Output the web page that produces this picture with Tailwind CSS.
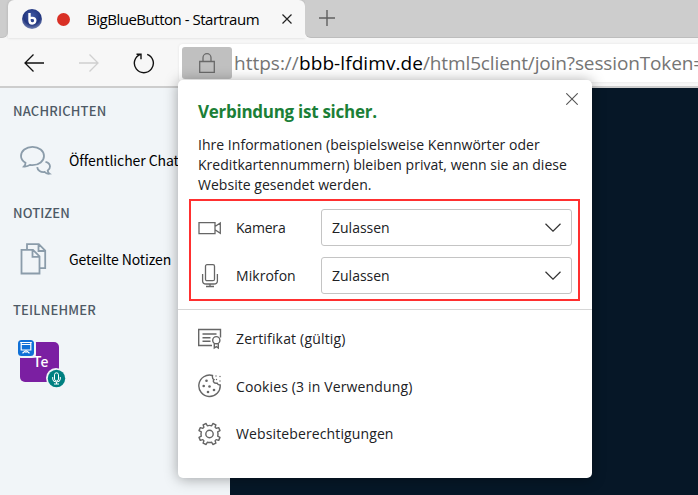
<!DOCTYPE html>
<html lang="de">
<head>
<meta charset="utf-8">
<title>BigBlueButton - Startraum</title>
<script src="https://cdn.jsdelivr.net/npm/@tailwindcss/browser@4"></script>
</head>
<body class="relative w-[698px] h-[495px] overflow-hidden bg-[#f7f7f7] font-['Open_Sans','Noto_Sans',sans-serif] text-[#202124] whitespace-nowrap flex flex-col">

<!-- Tab strip -->
<header class="h-[38px] shrink-0 flex bg-[#cdcdcd] border-b border-[#c2c2c2]">
  <div class="w-2 h-[38px] bg-[#f7f7f7]"><div class="h-full bg-[#cdcdcd] rounded-br-md border-b border-[#c2c2c2]"></div></div>
  <div class="w-[297px] h-[38px] bg-[#f7f7f7] rounded-t-md flex items-center pl-[14px] shadow-[0_0_3px_rgba(0,0,0,.15)]">
    <svg class="w-5 h-5 shrink-0" viewBox="0 0 20 20">
      <defs><radialGradient id="orb" cx=".5" cy=".35" r=".65"><stop offset="0" stop-color="#3f58a4"/><stop offset=".65" stop-color="#22367f"/><stop offset="1" stop-color="#7584b4"/></radialGradient></defs>
      <circle cx="10" cy="10" r="10" fill="url(#orb)"/>
      <path d="M7.500 4v7.500q0 3 2.800 3t3-3q0-2.600-3-2.600H8" fill="none" stroke="#fff" stroke-width="2.400"/>
    </svg>
    <div class="w-[13px] h-[13px] rounded-full bg-[#d93025] ml-[15px]"></div>
    <span class="text-[15px] leading-5 text-black ml-[17px] w-[173px] tracking-[-0.48px] -mt-px">BigBlueButton - Startraum</span>
    <svg class="w-[10px] h-[10px] ml-[22px]" viewBox="0 0 10 10"><path d="M.5.5l9 9m0-9l-9 9" stroke="#222" stroke-width="1.2"/></svg>
  </div>
  <div class="flex-1 h-[38px] bg-[#f7f7f7]">
    <div class="h-full bg-[#cdcdcd] rounded-bl-md border-b border-[#bdbdbd] pl-[14px] pt-[10px]">
      <svg class="w-4 h-4" viewBox="0 0 16 16"><path d="M8 0v16M0 8h16" stroke="#606060" stroke-width="1.400"/></svg>
    </div>
  </div>
</header>

<!-- Navigation and address bar -->
<nav class="h-[50px] shrink-0 border-b-2 border-[#cdcdcd] flex pt-[6px]">
  <div class="w-[179px] shrink-0 flex items-center pl-6 pb-[5px]">
    <svg class="w-5 h-[18px]" viewBox="0 0 20 18"><path d="M20 9H1M9.5.5L1 9l8.500 8.500" fill="none" stroke="#111" stroke-width="1.3"/></svg>
    <svg class="w-5 h-[18px] ml-[35px]" viewBox="0 0 20 18"><path d="M0 9h19M10.500.5L19 9l-8.500 8.500" fill="none" stroke="#d0d0d0" stroke-width="1.3"/></svg>
    <svg class="w-[22px] h-[22px] ml-[34px]" viewBox="0 0 22 22"><path d="M14.200 2.300A9.500 9.500 0 1 1 7.500 2.300M3.500 2.300h4.500v5" fill="none" stroke="#111" stroke-width="1.4"/></svg>
  </div>
  <div class="flex-1 min-w-0 overflow-hidden h-[38px] bg-white rounded-l flex pt-[3px] pl-[3px] shadow-[0_0_3px_rgba(0,0,0,.08)]">
    <div class="w-[50px] h-8 shrink-0 rounded-[3px] bg-[#c0c0c0] flex items-center justify-center">
      <svg class="w-4 h-5" viewBox="0 0 16 20"><path d="M.7 8.500h14.600v10.800H.7zM4 8.500V4.700a4 4 0 0 1 8 0v3.800" fill="none" stroke="#696969" stroke-width="1.3"/></svg>
    </div>
    <div class="ml-[2px] text-[19px] leading-8 text-[#757575] flex"><span class="w-[65px] shrink-0">https://</span><span class="w-[124px] shrink-0 text-black tracking-[0.08px]">bbb-lfdimv.de</span><span class="tracking-[-0.13px]">/html5client/join?sessionToken=</span></div>
  </div>
</nav>

<!-- Meeting page -->
<main class="flex-1 flex">
  <aside class="w-[230px] bg-[#f1f5f8] pl-[13px] font-['Noto_Sans_CJK_SC','Open_Sans',sans-serif] text-[14px] leading-5">
    <h2 class="mt-[13px] font-medium text-[#4e5a66] text-[13px] tracking-[0.18px]">NACHRICHTEN</h2>
    <div class="h-[82px] flex items-center pl-[7px] pb-[3px] text-black">
      <svg class="w-8 h-8" viewBox="0 0 32 32" fill="none" stroke="#8b9caa" stroke-width="1.800"><path d="M4 21.500Q5.500 20 5.500 17.700C2.500 16 1 13.500 1 11 1 6 6 1.800 12.500 1.800S24 6 24 11s-5 9.200-11.500 9.200q-1.500 0-2.500-.3Q7.500 21.800 4 21.500Z"/><path d="M25.500 16.800c2.800.7 4.500 2.600 4.500 4.800 0 2-1 3.200-2.300 4q.3 2.200 1.800 3.100-3 .5-4.800-1.700c-4 .5-7.200-1.500-7.500-4.800"/></svg>
      <span class="ml-[17px] -mt-px tracking-[-0.08px]">Öffentlicher Chat</span>
    </div>
    <h2 class="font-medium text-[#4e5a66] text-[13px] tracking-[0.1px]">NOTIZEN</h2>
    <div class="h-[77px] flex items-center pl-[7px] pb-[5px] text-black">
      <svg class="w-8 h-8" viewBox="0 0 32 32" fill="none" stroke="#8b9caa" stroke-width="1.800"><path d="M1.500 6.800h11.500l6.500 6.500v17.200h-18zM12.500 7v6.800h6.500M7 6.500V1.200h11.800l6.400 6.500v17.500h-5.500M18.500 1.500V8h6.500"/></svg>
      <span class="ml-[17px] tracking-[-0.13px]">Geteilte Notizen</span>
    </div>
    <h2 class="font-medium text-[#4e5a66] text-[13px] tracking-[0.18px]">TEILNEHMER</h2>
    <div class="relative mt-[22px] ml-[7px] w-[39px] h-10 rounded-[5px] bg-[#7b1fa2] text-white font-medium text-[14px] leading-[38px] pl-[13px]">Te
      <div class="absolute -left-[3px] -top-[3px] w-[19px] h-[19px] rounded bg-[#f1f5f8]"></div>
      <svg class="absolute -left-[2px] -top-[2px] w-4 h-4" viewBox="0 0 16 16"><rect width="16" height="16" rx="3.500" fill="#0f70d7"/><path d="M2.200 2.500h11.600M3.200 3v7h9.600V3M3.500 4.500h9M8 10v3M4.500 13.200l2.500-2M11.500 13.200l-2.500-2" fill="none" stroke="#fff" stroke-width="1.200"/></svg>
      <svg class="absolute left-[26px] top-[26px] w-5 h-5" viewBox="0 0 20 20"><circle cx="10" cy="10" r="10" fill="#f1f5f8"/><circle cx="10.500" cy="10.500" r="8.700" fill="#008081"/><rect x="8.500" y="4.800" width="4" height="8.200" rx="2" fill="none" stroke="#fff"/><path d="M6.700 9v2q0 3 3.800 3t3.800-3V9M10.500 14v2M8 16h5" fill="none" stroke="#fff"/></svg>
    </div>
  </aside>
  <div class="flex-1 bg-[#061727]"></div>
</main>

<!-- Site information popup -->
<section class="absolute left-[178px] top-[80px] w-[414px] h-[398px] bg-white rounded-[5px] shadow-[0_1px_14px_rgba(0,0,0,.35)] text-[14px]">
  <svg class="absolute left-[388px] top-[13px] w-3 h-3" viewBox="0 0 12 12"><path d="M.3.3l11.400 11.400m0-11.400L.3 11.700" stroke="#555" stroke-width="1.100"/></svg>
  <div class="pl-5 pt-5 h-[121px]">
    <h1 class="text-[17px] leading-6 font-bold text-[#1b7f37] tracking-[-0.27px]">Verbindung ist sicher.</h1>
    <p class="mt-[11px] leading-5 tracking-[0.03px]">Ihre Informationen (beispielsweise Kennwörter oder<br>Kreditkartennummern) bleiben privat, wenn sie an diese<br>Website gesendet werden.</p>
  </div>
  <div class="ml-[11px] -mt-[2px] w-[391px] h-[102px] border-2 border-[#ff3030] pl-[7px] pt-2 flex flex-col gap-[11px]">
    <div class="flex items-center h-[37px]">
      <svg class="w-6 h-6" viewBox="0 0 24 24" fill="none" stroke="#666" stroke-width="1.300"><path d="M1 6.600h16v11H1zM17 10.500l5.300-3.500v10.200L17 13.700"/></svg>
      <span class="ml-[14px] w-[85px] tracking-[-0.2px]">Kamera</span>
      <div class="w-[251px] h-[37px] border border-[#c4c4c4] rounded-[3px] flex items-center justify-between px-[10px]"><span>Zulassen</span><svg class="w-4 h-[9px]" viewBox="0 0 16 9"><path d="M.5.8L8 8.200 15.500.8" fill="none" stroke="#333" stroke-width="1.200"/></svg></div>
    </div>
    <div class="flex items-center h-[37px]">
      <svg class="w-6 h-6" viewBox="0 0 24 24" fill="none" stroke="#666" stroke-width="1.300"><rect x="7.500" y=".7" width="9" height="16" rx="1.500"/><path d="M4.600 10v7q0 3 3.500 3h7.800q3.500 0 3.500-3v-7M12 20v2.500M8 22.500h8"/></svg>
      <span class="ml-[14px] w-[85px] tracking-[0.05px]">Mikrofon</span>
      <div class="w-[251px] h-[37px] border border-[#c4c4c4] rounded-[3px] flex items-center justify-between px-[10px]"><span>Zulassen</span><svg class="w-4 h-[9px]" viewBox="0 0 16 9"><path d="M.5.8L8 8.200 15.500.8" fill="none" stroke="#333" stroke-width="1.200"/></svg></div>
    </div>
  </div>
  <div class="mt-2 border-t border-[#d6d6d6] pt-1 pl-5">
    <div class="h-12 flex items-center">
      <svg class="w-6 h-6" viewBox="0 0 24 24" fill="none" stroke="#666" stroke-width="1.400"><path d="M14 19.500H.7V3.500h21.800v8M4.500 8h14M4.500 11.700h8M4.500 15.200h8"/><circle cx="18.300" cy="14.200" r="3.600"/><path d="M16.300 17.300V22l2-1.300 2 1.300v-4.700"/></svg>
      <span class="ml-[14px] tracking-[0.18px]">Zertifikat (gültig)</span>
    </div>
    <div class="h-12 flex items-center">
      <svg class="w-6 h-6" viewBox="0 0 24 24" fill="none" stroke="#666" stroke-width="1.400"><path d="M14.500 1.500A10.700 10.700 0 1 0 22.200 11q-2.500.2-3-1.800-3 .5-3.700-1.500-.4-1.200.4-2-1.900-1-1.400-4.200Z"/><g fill="#666" stroke="none"><circle cx="8.500" cy="6.700" r="1.300"/><circle cx="5.700" cy="12" r="1.300"/><circle cx="11.500" cy="12.500" r="1.300"/><circle cx="10" cy="18" r="1.300"/><circle cx="16" cy="16" r="1.300"/><circle cx="18" cy="2" r=".7"/><circle cx="22" cy="2.500" r=".7"/><circle cx="18.500" cy="5.500" r=".7"/><circle cx="22" cy="7" r=".7"/></g></svg>
      <span class="ml-[14px] tracking-[0.14px]">Cookies (3 in Verwendung)</span>
    </div>
    <div class="h-[47px] flex items-center">
      <svg class="w-6 h-6" viewBox="0 0 24 24" fill="none" stroke="#666" stroke-width="1.400" stroke-linejoin="round"><g transform="translate(-.5 0)"><path d="M8.600 1.500l1.200 2.300q2.200-.8 4.400 0l1.200-2.300 3 1.300-.8 2.500q.6.500 1.100 1.100l2.500-.8 1.300 3-2.300 1.200q.6 2.200 0 4.400l2.300 1.200-1.300 3-2.500-.8q-.5.600-1.100 1.100l.8 2.500-3 1.300-1.200-2.300q-2.200.6-4.400 0l-1.200 2.300-3-1.300.8-2.500q-.6-.5-1.100-1.100l-2.500.8-1.300-3 2.300-1.200q-.6-2.200 0-4.400L1.500 8.600l1.300-3 2.500.8q.5-.6 1.100-1.100l-.8-2.500z"/><circle cx="12" cy="12" r="3.700"/></g></svg>
      <span class="ml-[14px] tracking-[0.12px]">Websiteberechtigungen</span>
    </div>
  </div>
</section>
</body>
</html>
